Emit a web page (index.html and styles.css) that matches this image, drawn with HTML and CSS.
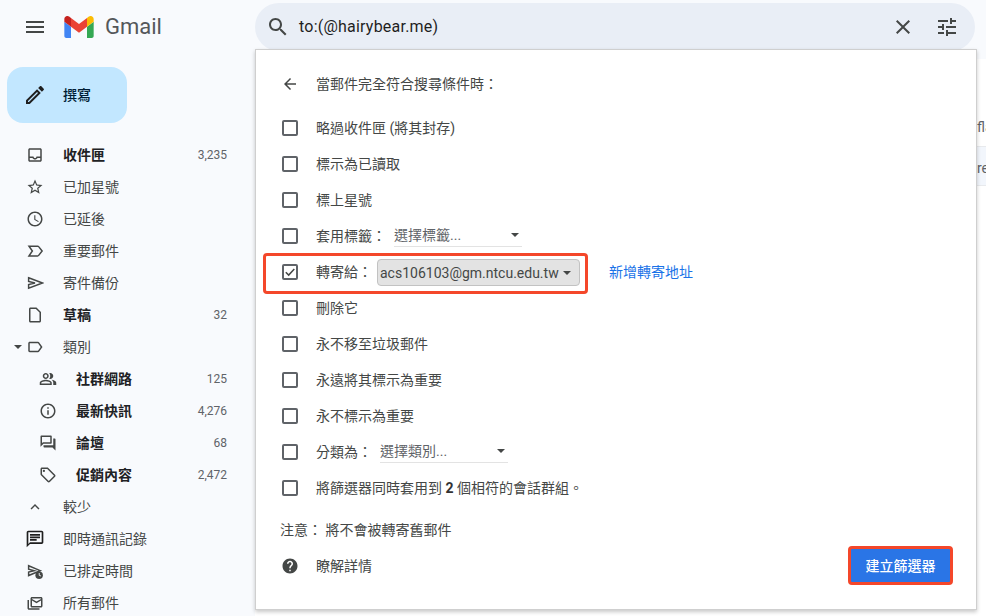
FILE: index.html
```html
<!DOCTYPE html>
<html lang="zh-Hant">
<head>
<meta charset="utf-8">
<title>Gmail</title>
<link rel="stylesheet" href="styles.css">
</head>
<body>
<div class="app">
  <header class="topbar">
    <div class="brand">
      <svg class="icon24" viewBox="0 0 24 24"><path d="M3 18h18v-2H3v2zm0-5h18v-2H3v2zm0-7v2h18V6H3z"/></svg>
      <svg class="logo" viewBox="52 42 88 66"><path fill="#4285f4" d="M58 108h14V74L52 59v43c0 3.32 2.69 6 6 6"/><path fill="#34a853" d="M120 108h14c3.32 0 6-2.69 6-6V59l-20 15"/><path fill="#fbbc04" d="M120 48v26l20-15v-8c0-7.42-8.47-11.65-14.4-7.2"/><path fill="#ea4335" d="M72 74V48l24 18 24-18v26L96 92"/><path fill="#c5221f" d="M52 51v8l20 15V48l-5.6-4.2c-5.94-4.45-14.4-.22-14.4 7.2"/></svg>
      <span class="wordmark">Gmail</span>
    </div>
    <div class="search">
      <svg class="icon24" viewBox="0 0 24 24"><path d="M15.5 14h-.79l-.28-.27C15.41 12.59 16 11.11 16 9.5 16 5.91 13.09 3 9.5 3S3 5.91 3 9.5 5.91 16 9.5 16c1.61 0 3.09-.59 4.23-1.57l.27.28v.79l5 4.99L20.49 19l-4.99-5zm-6 0C7.01 14 5 11.99 5 9.5S7.01 5 9.5 5 14 7.01 14 9.5 11.99 14 9.5 14z"/></svg>
      <span class="query">to:(@hairybear.me)</span>
      <svg class="icon24" viewBox="0 0 24 24"><path d="M19 6.41L17.59 5 12 10.59 6.41 5 5 6.41 10.59 12 5 17.59 6.41 19 12 13.41 17.59 19 19 17.59 13.41 12z"/></svg>
      <svg class="icon24" viewBox="0 0 24 24"><path d="M3 17v2h6v-2H3zM3 5v2h10V5H3zm10 16v-2h8v-2h-8v-2h-2v6h2zM7 9v2H3v2h4v2h2V9H7zm14 4v-2H11v2h10zm-6-4h2V7h4V5h-4V3h-2v6z"/></svg>
    </div>
  </header>
  <div class="body">
    <nav class="sidebar">
      <button class="compose">
        <svg class="icon24 dark" viewBox="0 0 24 24"><path d="M14.06 9.02l.92.92L5.92 19H5v-.92l9.06-9.06M17.66 3c-.25 0-.51.1-.7.29l-1.83 1.83 3.75 3.75 1.83-1.83c.39-.39.39-1.02 0-1.41l-2.34-2.34c-.2-.2-.45-.29-.71-.29zm-3.6 3.19L3 17.25V21h3.75L17.81 9.94l-3.75-3.75z"/></svg>
        <span>撰寫</span>
      </button>
      <ul class="menu">
        <li class="item bold"><svg class="icon18" viewBox="0 0 24 24"><path d="M19 3H5c-1.1 0-2 .9-2 2v14c0 1.1.9 2 2 2h14c1.1 0 2-.9 2-2V5c0-1.1-.9-2-2-2zm0 16H5v-3h3.56c.69 1.19 1.97 2 3.45 2s2.75-.81 3.45-2H19v3zm0-5h-4.99c0 1.1-.9 2-2 2s-2-.9-2-2H5V5h14v9z"/></svg><span class="name">收件匣</span><span class="count">3,235</span></li>
        <li class="item"><svg class="icon18" viewBox="0 0 24 24"><path d="M22 9.24l-7.19-.62L12 2 9.19 8.63 2 9.24l5.46 4.73L5.82 21 12 17.27 18.18 21l-1.63-7.03L22 9.24zM12 15.4l-3.76 2.27 1-4.28-3.32-2.88 4.38-.38L12 6.1l1.71 4.04 4.38.38-3.32 2.88 1 4.28L12 15.4z"/></svg><span class="name">已加星號</span></li>
        <li class="item"><svg class="icon18" viewBox="0 0 24 24"><path d="M11.99 2C6.47 2 2 6.48 2 12s4.47 10 9.99 10C17.52 22 22 17.52 22 12S17.52 2 11.99 2zM12 20c-4.42 0-8-3.58-8-8s3.58-8 8-8 8 3.58 8 8-3.58 8-8 8zm.5-13H11v6l5.25 3.15.75-1.23-4.5-2.67z"/></svg><span class="name">已延後</span></li>
        <li class="item"><svg class="icon18 line" viewBox="0 0 24 24"><path d="M4 5.5h11.5c.6 0 1.1.3 1.4.7L21.5 12l-4.6 5.8c-.3.4-.8.7-1.4.7H4L8.5 12z"/></svg><span class="name">重要郵件</span></li>
        <li class="item"><svg class="icon18 line" viewBox="0 0 24 24"><path d="M3.5 5L22 12 3.5 19v-5l8.5-2-8.5-2z"/></svg><span class="name">寄件備份</span></li>
        <li class="item bold"><svg class="icon18" viewBox="0 0 24 24"><path d="M14 2H6c-1.1 0-2 .9-2 2v16c0 1.1.89 2 1.99 2H18c1.1 0 2-.9 2-2V8l-6-6zm4 18H6V4h7.17L18 8.83V20z"/></svg><span class="name">草稿</span><span class="count">32</span></li>
        <li class="item parent"><span class="caret"></span><svg class="icon18" viewBox="0 0 24 24"><path d="M17.63 5.84C17.27 5.33 16.67 5 16 5L5 5.01C3.9 5.01 3 5.9 3 7v10c0 1.1.9 1.99 2 1.99L16 19c.67 0 1.27-.33 1.63-.84L22 12l-4.37-6.16zM16 17H5V7h11l3.55 5L16 17z"/></svg><span class="name">類別</span></li>
        <li class="item sub bold"><svg class="icon18" viewBox="0 0 24 24"><path d="M16.67 13.13C18.04 14.06 19 15.32 19 17v3h4v-3c0-2.18-3.57-3.47-6.33-3.87zM15 12c2.21 0 4-1.79 4-4s-1.79-4-4-4c-.47 0-.91.1-1.33.24C14.5 5.27 15 6.58 15 8s-.5 2.73-1.33 3.76c.42.14.86.24 1.33.24zM9 12c2.21 0 4-1.79 4-4s-1.79-4-4-4-4 1.79-4 4 1.79 4 4 4zm0-6c1.1 0 2 .9 2 2s-.9 2-2 2-2-.9-2-2 .9-2 2-2zM9 13c-2.67 0-8 1.34-8 4v3h16v-3c0-2.66-5.33-4-8-4zm6 5H3v-.99C3.2 16.29 6.3 15 9 15s5.8 1.29 6 2z"/></svg><span class="name">社群網路</span><span class="count">125</span></li>
        <li class="item sub bold"><svg class="icon18" viewBox="0 0 24 24"><path d="M11 7h2v2h-2zm0 4h2v6h-2zm1-9C6.48 2 2 6.48 2 12s4.48 10 10 10 10-4.48 10-10S17.52 2 12 2zm0 18c-4.41 0-8-3.59-8-8s3.59-8 8-8 8 3.59 8 8-3.59 8-8 8z"/></svg><span class="name">最新快訊</span><span class="count">4,276</span></li>
        <li class="item sub bold"><svg class="icon18" viewBox="0 0 24 24"><path d="M15 4v7H5.17L4 12.17V4h11m1-2H3c-.55 0-1 .45-1 1v14l4-4h10c.55 0 1-.45 1-1V3c0-.55-.45-1-1-1zm5 4h-2v9H6v2c0 .55.45 1 1 1h11l4 4V7c0-.55-.45-1-1-1z"/></svg><span class="name">論壇</span><span class="count">68</span></li>
        <li class="item sub bold"><svg class="icon18" viewBox="0 0 24 24"><path d="M21.41 11.58l-9-9C12.05 2.22 11.55 2 11 2H4c-1.1 0-2 .9-2 2v7c0 .55.22 1.05.59 1.42l9 9c.36.36.86.58 1.41.58s1.05-.22 1.41-.59l7-7c.37-.36.59-.86.59-1.41s-.23-1.06-.59-1.42zM13 20.01L4 11V4h7v-.01l9 9-7 7.02z"/><circle cx="6.5" cy="6.5" r="1.5"/></svg><span class="name">促銷內容</span><span class="count">2,472</span></li>
        <li class="item"><svg class="icon18" viewBox="0 0 24 24"><path d="M12 8l-6 6 1.41 1.41L12 10.83l4.59 4.58L18 14z"/></svg><span class="name">較少</span></li>
        <li class="item"><svg class="icon18 dark" viewBox="1.2 1.2 21.6 21.6"><path d="M20 2H4c-1.1 0-2 .9-2 2v18l4-4h14c1.1 0 2-.9 2-2V4c0-1.1-.9-2-2-2zm0 14H6l-2 2V4h16v12z"/><path d="M6 12h8v2H6zm0-3h12v2H6zm0-3h12v2H6z"/></svg><span class="name">即時通訊記錄</span></li>
        <li class="item"><svg class="icon18" viewBox="0 0 24 24"><path class="trace" d="M3.5 5L19 11.5 3.5 18v-4.5L11 11.5 3.5 9.5z"/><circle cx="17.5" cy="17.5" r="5"/><path fill="#f8fafd" d="M17 14.5h1.2v2.7l2 1.2-.6 1-2.6-1.6z"/></svg><span class="name">已排定時間</span></li>
        <li class="item"><svg class="icon18" viewBox="0 0 24 24"><path d="M20 4H8c-1.1 0-2 .9-2 2v10c0 1.1.9 2 2 2h12c1.1 0 2-.9 2-2V6c0-1.1-.9-2-2-2zm0 2v.5l-6 3.5-6-3.5V6h12zM8 16V8.7l6 3.5 6-3.5V16H8zM4 8H2v11c0 1.1.9 2 2 2h14v-2H4V8z"/></svg><span class="name">所有郵件</span></li>
      </ul>
    </nav>
    <main class="main">
      <p class="snippet">flag</p>
      <p class="snippet band">ready</p>
    </main>
  </div>
  <section class="dialog">
    <div class="dialog-head">
      <svg class="icon18" viewBox="0 0 24 24"><path d="M20 11H7.83l5.59-5.59L12 4l-8 8 8 8 1.41-1.41L7.83 13H20v-2z"/></svg>
      <span>當郵件完全符合搜尋條件時：</span>
    </div>
    <div class="opt"><span class="box"></span><span>略過收件匣 (將其封存)</span></div>
    <div class="opt"><span class="box"></span><span>標示為已讀取</span></div>
    <div class="opt"><span class="box"></span><span>標上星號</span></div>
    <div class="opt"><span class="box"></span><span>套用標籤：</span><span class="select">選擇標籤...<i class="arrow"></i></span></div>
    <div class="opt forward">
      <span class="box"><svg viewBox="0 0 12 12"><path d="M1.8 6.2l2.9 2.9 5.6-6" fill="none" stroke="#444746" stroke-width="1.5"/></svg></span>
      <span>轉寄給：</span>
      <span class="address">acs106103@gm.ntcu.edu.tw<i class="arrow"></i></span>
      <a class="add-link">新增轉寄地址</a>
      <span class="mark"></span>
    </div>
    <div class="opt"><span class="box"></span><span>刪除它</span></div>
    <div class="opt"><span class="box"></span><span>永不移至垃圾郵件</span></div>
    <div class="opt"><span class="box"></span><span>永遠將其標示為重要</span></div>
    <div class="opt"><span class="box"></span><span>永不標示為重要</span></div>
    <div class="opt"><span class="box"></span><span>分類為：</span><span class="select">選擇類別...<i class="arrow"></i></span></div>
    <div class="opt"><span class="box"></span><span>將篩選器同時套用到 <b>2</b> 個相符的會話群組。</span></div>
    <p class="note">注意： 將不會被轉寄舊郵件</p>
    <div class="dialog-foot">
      <div class="learn">
        <svg class="icon18" viewBox="0 0 24 24"><path d="M12 2C6.48 2 2 6.48 2 12s4.48 10 10 10 10-4.48 10-10S17.52 2 12 2zm1 17h-2v-2h2v2zm2.07-7.75l-.9.92C13.45 12.9 13 13.5 13 15h-2v-.5c0-1.1.45-2.1 1.17-2.83l1.24-1.26c.37-.36.59-.86.59-1.41 0-1.1-.9-2-2-2s-2 .9-2 2H8c0-2.21 1.79-4 4-4s4 1.79 4 4c0 .88-.36 1.68-.93 2.25z"/></svg>
        <span>瞭解詳情</span>
      </div>
      <button class="create">建立篩選器</button>
    </div>
  </section>
</div>
</body>
</html>
```
FILE: styles.css
```css
* { box-sizing: border-box; }
html, body { margin: 0; height: 100%; overflow: hidden; }
body {
  background: #f8fafd;
  color: #444746;
  font: 14px/20px Roboto, "Noto Sans CJK TC", sans-serif;
}
svg { display: block; flex: none; fill: #444746; }
.icon24 { width: 24px; height: 24px; }
.icon18 { width: 18px; height: 18px; }
.dark { fill: #1f1f1f; }
.line { fill: none; stroke: #444746; stroke-width: 2; }
.trace { fill: none; stroke: #444746; stroke-width: 2; }

.app { position: relative; width: 986px; height: 616px; overflow: hidden; }

.topbar { display: flex; height: 59px; padding-top: 3px; }
.brand { display: flex; align-items: center; width: 255px; height: 48px; padding-left: 23px; }
.logo { width: 30px; height: 22px; margin-left: 17px; }
.wordmark { margin-left: 11px; font-size: 22px; color: #54575a; }

.search {
  display: flex; align-items: center; gap: 20px;
  width: 720px; height: 48px; padding: 0 16px 0 11px;
  border-radius: 24px; background: #e9eef6;
}
.query { flex: 1; margin-left: -11px; font-size: 16px; letter-spacing: .22px; color: #1f1f1f; }

.body { display: flex; height: 557px; }
.sidebar { width: 255px; flex: none; padding-top: 8px; }
.compose {
  display: flex; align-items: center; gap: 16px;
  width: 120px; height: 56px; margin: 0 0 16px 7px; padding: 0 0 0 16px;
  border: 0; border-radius: 16px; background: #c2e7ff;
  color: #001d35; font: 500 14px/20px Roboto, "Noto Sans CJK TC", sans-serif;
}
.menu { margin: 0; padding: 0; list-style: none; }
.item { display: flex; align-items: center; gap: 19px; height: 32px; width: 227px; padding-left: 26px; }
.item .name { flex: 1; }
.item.bold { font-weight: 700; color: #202124; }
.item.sub { padding-left: 39px; }
.item.parent { padding-left: 14px; gap: 0; }
.item.parent .name { margin-left: 19px; }
.caret {
  width: 8px; height: 4px; margin-right: 4px;
  border-left: 4px solid transparent; border-right: 4px solid transparent;
  border-top: 4px solid #444746;
}
.count { font-size: 12px; font-weight: 400; color: #5f6368; }

.main { flex: 1; padding-top: 58px; background: #fff; border-radius: 16px 0 0 0; color: #5f6368; overflow: hidden; }
.snippet { margin: 0; height: 29px; padding-left: 722px; line-height: 20px; white-space: nowrap; }
.band { height: 40px; line-height: 42px; background: #f2f6fc; border-top: 1px solid #e8eaed; border-bottom: 1px solid #e8eaed; }

.dialog {
  position: absolute; left: 255px; top: 49px;
  width: 722px; height: 561px; padding: 20px 23px 0 26px;
  background: #fff; border: 1px solid #cfcfcf; box-shadow: 0 2px 4px rgba(0,0,0,.22);
}
.dialog-head { display: flex; align-items: center; gap: 17px; height: 28px; margin: 0 0 12px -1px; }
.opt { position: relative; display: flex; align-items: center; height: 36px; }
.box {
  display: flex; align-items: center; justify-content: center;
  width: 16px; height: 16px; margin-right: 18px; flex: none;
  border: 2px solid #5f6368; border-radius: 2px;
}
.box svg { width: 12px; height: 12px; fill: none; }
b { color: #333; }

.select {
  position: relative; display: block; width: 128px; height: 21px; margin-left: 8px;
  border-bottom: 1px solid #e3e3e3; color: #5f6368; box-sizing: content-box;
}
.arrow {
  position: absolute; right: 3px; top: 8px;
  border-left: 4.5px solid transparent; border-right: 4.5px solid transparent;
  border-top: 4.5px solid #444746;
}
.address {
  position: relative; display: block; width: 203px; height: 27px; margin-left: 5px; padding-left: 2px;
  line-height: 26px; white-space: nowrap;
  background: #e3e3e3; border: 1px solid #c2c2c2; border-radius: 4px;
}
.address .arrow { right: 8px; top: 11px; }
.add-link { margin-left: 29px; color: #1a73e8; }
.mark {
  position: absolute; left: -19px; top: -1px;
  width: 325px; height: 41px;
  border: 3px solid #f4472a; border-radius: 4px;
}
.note { margin: 14px 0 0 -2px; height: 20px; }
.dialog-foot { display: flex; align-items: center; justify-content: space-between; margin-top: 6px; }
.learn { display: flex; align-items: center; gap: 17px; margin-left: -1px; }
.create {
  width: 105px; height: 39px; padding: 0;
  background: #2a75e6; border: 3px solid #f4472a; border-radius: 4px;
  color: #fff; font: 500 14px/20px Roboto, "Noto Sans CJK TC", sans-serif;
}
```
